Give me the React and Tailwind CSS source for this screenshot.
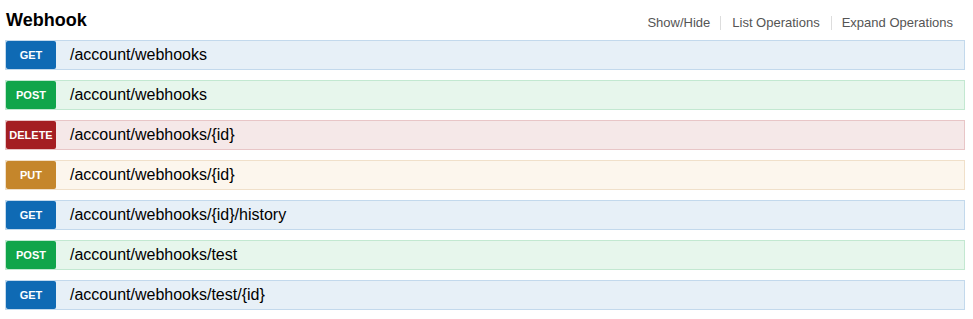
const styles = {
  get: { row: "bg-[#e7f0f7] border-[#c3d9ec]", badge: "bg-[#0f6ab4]" },
  post: { row: "bg-[#e7f6ec] border-[#c3e8d1]", badge: "bg-[#10a54a]" },
  delete: { row: "bg-[#f5e8e8] border-[#e8c6c7]", badge: "bg-[#a41e22]" },
  put: { row: "bg-[#fcf6ed] border-[#f0e0ca]", badge: "bg-[#c5862b]" },
};

const operations = [
  { method: "get", path: "/account/webhooks" },
  { method: "post", path: "/account/webhooks" },
  { method: "delete", path: "/account/webhooks/{id}" },
  { method: "put", path: "/account/webhooks/{id}" },
  { method: "get", path: "/account/webhooks/{id}/history" },
  { method: "post", path: "/account/webhooks/test" },
  { method: "get", path: "/account/webhooks/test/{id}" },
];

function Operation({ method, path }) {
  const s = styles[method];
  return (
    <div className={`flex h-[30px] border ${s.row}`}>
      <span
        className={`w-[50px] shrink-0 flex items-center justify-center rounded-[2px] text-[11px] font-bold text-white uppercase ${s.badge}`}
      >
        {method}
      </span>
      <span className="pl-[14px] flex items-center text-[16px] text-black">{path}</span>
    </div>
  );
}

export default function App() {
  return (
    <div className="bg-white px-[5px] pr-[8px] font-['Liberation_Sans',Arial,sans-serif]">
      <div className="flex justify-between items-start h-[40px]">
        <h2 className="mt-[9px] ml-[1px] text-[18px] leading-[22px] font-bold text-black">Webhook</h2>
        <ul className="flex mt-[16px] text-[13px] leading-[14px] text-[#555]">
          <li className="px-[10px] border-r border-[#ddd]">Show/Hide</li>
          <li className="px-[11px] border-r border-[#ddd]">List Operations</li>
          <li className="pl-[10px] pr-[12px]">Expand Operations</li>
        </ul>
      </div>
      <div className="flex flex-col gap-[10px]">
        {operations.map((op, i) => (
          <Operation key={i} {...op} />
        ))}
      </div>
    </div>
  );
}
